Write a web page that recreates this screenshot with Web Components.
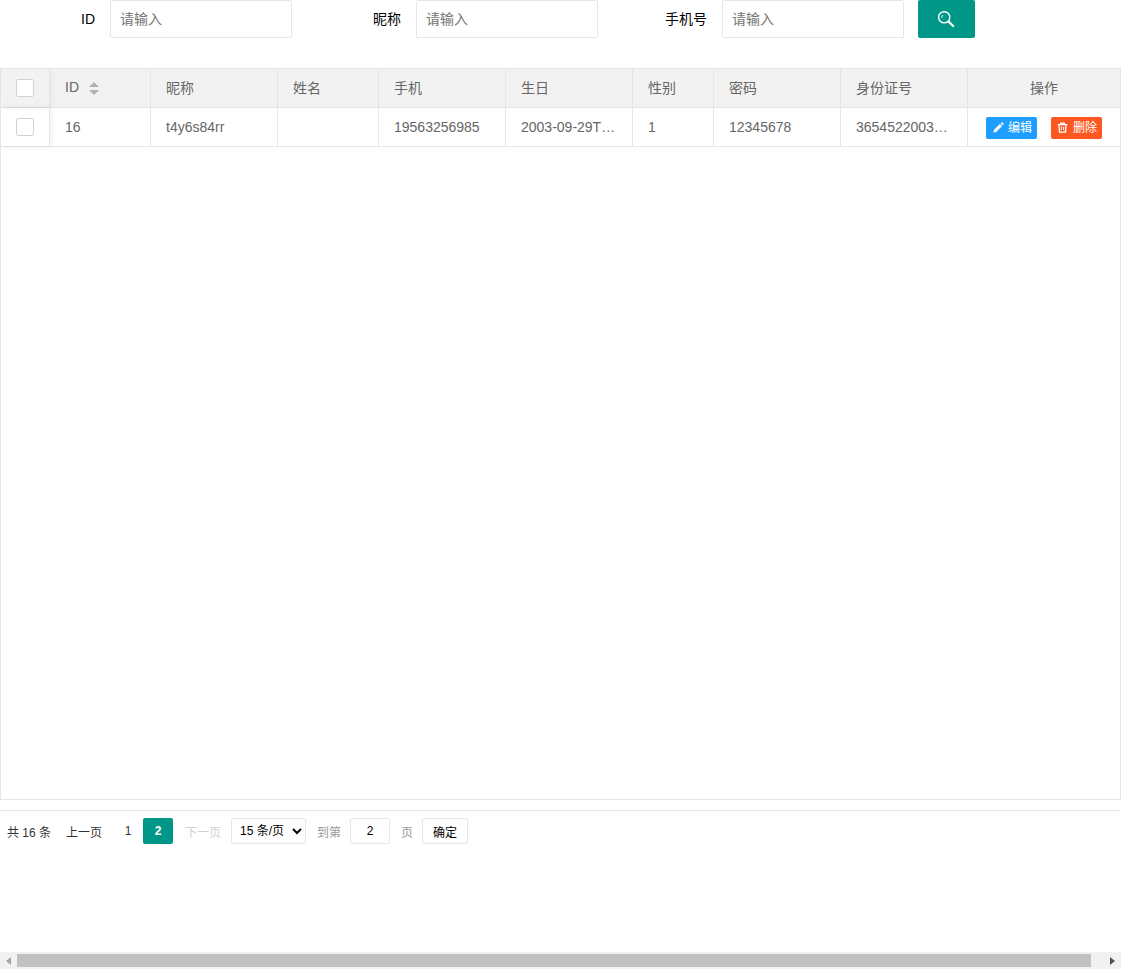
<!DOCTYPE html>
<html lang="zh">
<head>
<meta charset="utf-8">
<title>用户列表</title>
<style>
  html, body { margin: 0; padding: 0; background: #fff; overflow: hidden; }
  body { font: 14px "Liberation Sans", "Noto Sans CJK SC", sans-serif; color: #666; }
</style>
</head>
<body>
<user-page>
  <search-form></search-form>
  <data-table></data-table>
  <table-pager></table-pager>
</user-page>
<h-scrollbar></h-scrollbar>
<script>
"use strict";

const Columns = [
  { title: '', width: 49 },
  { title: 'ID', width: 101, sort: true },
  { title: '昵称', width: 127 },
  { title: '姓名', width: 101 },
  { title: '手机', width: 127 },
  { title: '生日', width: 127 },
  { title: '性别', width: 81 },
  { title: '密码', width: 127 },
  { title: '身份证号', width: 127 },
  { title: '操作', width: 152, center: true }
];
const Rows = [
  ['16', 't4y6s84rr', '', '19563256985', '2003-09-29T…', '1', '12345678', '3654522003…']
];

class UserPage extends HTMLElement {
  constructor() {
    super();
    this.attachShadow({ mode: 'open' }).innerHTML = `
    <style>
      :host { display: flex; flex-direction: column; height: 952px; }
    </style>
    <slot></slot>`;
  }
}

class SearchForm extends HTMLElement {
  constructor() {
    super();
    const fields = ['ID', '昵称', '手机号'].map((name) => `
      <label>${name}</label>
      <input type="text" placeholder="请输入">`).join('');
    this.attachShadow({ mode: 'open' }).innerHTML = `
    <style>
      :host { display: block; margin-bottom: 30px; }
      .row { display: flex; align-items: stretch; height: 38px; }
      label {
        width: 80px; padding: 0 15px; line-height: 38px; text-align: right;
        color: #000; font-size: 14px;
      }
      input {
        box-sizing: border-box; width: 182px; height: 38px; margin: 0 14px 0 0; padding: 0 0 0 9px;
        border: 1px solid #e6e6e6; border-radius: 2px; outline: none; background: #fff;
        font: inherit; color: #666;
      }
      input::placeholder { color: #757575; opacity: 1; }
      button {
        display: flex; align-items: center; justify-content: center;
        width: 57px; height: 38px; padding: 0; border: 0; border-radius: 2px; background: #009688;
      }
    </style>
    <div class="row">
      ${fields}
      <button type="button" aria-label="搜索">
        <svg width="18" height="18" viewBox="0 0 18 18" fill="none" stroke="#fff">
          <circle cx="6.2" cy="7.3" r="5.6" stroke-width="1.4"/>
          <path d="M3.8 7.800c0-1.200.4-2.200 1.200-2.800" stroke-width="1"/>
          <path d="M10.600 11.600l4.600 4.400" stroke-width="2.200" stroke-linecap="round"/>
        </svg>
      </button>
    </div>`;
  }
}

class CheckBox extends HTMLElement {
  constructor() {
    super();
    this.attachShadow({ mode: 'open' }).innerHTML = `
    <style>
      :host {
        display: block; box-sizing: border-box; width: 18px; height: 18px;
        border: 1px solid #d2d2d2; border-radius: 2px; background: #fff;
      }
    </style>`;
  }
}

class SmallButton extends HTMLElement {
  constructor() {
    super();
    const kind = this.getAttribute('kind');
    const edit = kind === 'edit';
    const icon = edit
      ? '<path d="M1.500 12.500l.7-3 6.300-6.300 2.300 2.300-6.300 6.300zM9.300 2.400l.8-.8c.3-.3.7-.3 1 0l1.300 1.300c.3.3.3.7 0 1l-.8.8z" fill="#fff"/>'
      : '<path d="M1.800 3.800h10.400M5 3.600V2.200h4v1.400M3.200 4l.6 8h6.400l.6-8" fill="none" stroke="#fff" stroke-width="1.400"/><path d="M5.800 6.200v3.600M8.200 6.200v3.600" stroke="#fff" stroke-width="1.100"/>';
    this.attachShadow({ mode: 'open' }).innerHTML = `
    <style>
      :host {
        display: inline-flex; align-items: center; gap: ${edit ? 3 : 4}px;
        box-sizing: border-box; width: 51px; height: 22px; margin-top: 1px;
        padding-left: ${edit ? 6 : 5}px; border-radius: 2px;
        color: #fff; font-size: 12px; line-height: 22px;
        background: ${edit ? '#1e9fff' : '#ff5722'};
      }
      svg { flex: none; }
    </style>
    <svg width="13" height="13" viewBox="0 0 14 14">${icon}</svg><slot></slot>`;
  }
}

class DataTable extends HTMLElement {
  constructor() {
    super();
    const track = Columns.map((c) => c.width + 'px').join(' ');
    const head = Columns.map((c, i) => {
      if (i === 0) {
        return '<div class="cell check"><check-box></check-box></div>';
      }
      const sort = c.sort ? `
        <svg class="sort" width="10" height="13" viewBox="0 0 10 13" fill="#b2b2b2"><path d="M5 0l5 5H0zM5 13L0 8h10z"/></svg>` : '';
      return `<div class="cell${c.center ? ' center' : ''}"><span class="text">${c.title}</span>${sort}</div>`;
    }).join('');
    const body = Rows.map((r) => `
      <div class="row">
        <div class="cell check"><check-box></check-box></div>
        ${r.map((v) => `<div class="cell"><span class="text">${v}</span></div>`).join('')}
        <div class="cell actions">
          <small-button kind="edit">编辑</small-button>
          <small-button kind="delete">删除</small-button>
        </div>
      </div>`).join('');
    this.attachShadow({ mode: 'open' }).innerHTML = `
    <style>
      :host {
        display: block; box-sizing: border-box; height: 732px;
        border: 1px solid #e6e6e6; background: #fff; overflow: hidden;
      }
      .row { display: grid; grid-template-columns: ${track}; height: 39px; box-sizing: border-box; border-bottom: 1px solid #e6e6e6; }
      .row.head { background: #f2f2f2; }
      .head .text { margin-bottom: 2px; }
      .cell {
        display: flex; align-items: center; box-sizing: border-box; min-width: 0;
        padding: 0 15px; border-right: 1px solid #e6e6e6; font-size: 14px; color: #666;
      }
      .cell:last-child { border-right: 0; }
      .text { white-space: nowrap; }
      .check {
        justify-content: center; padding: 0; position: relative; z-index: 1;
        background: inherit; box-shadow: 1px 0 6px rgba(0, 0, 0, .07);
      }
      .center { justify-content: center; }
      .sort { flex: none; margin-left: 10px; }
      .actions { justify-content: flex-start; gap: 14px; padding: 0 0 0 18px; }
    </style>
    <div class="row head">${head}</div>
    ${body}`;
  }
}

class TablePager extends HTMLElement {
  constructor() {
    super();
    this.attachShadow({ mode: 'open' }).innerHTML = `
    <style>
      :host {
        display: flex; align-items: center; box-sizing: border-box; height: 34px;
        margin-top: 10px; padding: 7px 0 0 7px; border-top: 1px solid #e6e6e6;
        font-size: 12px; color: #333;
      }
      .prev { margin-left: 15px; }
      .num { width: 30px; text-align: center; line-height: 26px; }
      .first { margin-left: 11px; }
      .current { height: 26px; border-radius: 2px; background: #009688; color: #fff; font-weight: bold; }
      .next { margin-left: 12px; color: #d2d2d2; }
      select {
        box-sizing: border-box; width: 75px; height: 26px; margin-left: 10px; padding: 0 0 0 4px;
        border: 1px solid #e6e6e6; border-radius: 2px; background: #fff; color: #000;
        font: inherit; outline: none;
      }
      .muted { color: #999; }
      .goto { margin-left: 11px; }
      input {
        box-sizing: border-box; width: 40px; height: 26px; margin-left: 9px; padding: 0;
        border: 1px solid #e6e6e6; border-radius: 2px; text-align: center;
        font: inherit; color: #000; outline: none;
      }
      .page { margin-left: 11px; }
      button {
        box-sizing: border-box; width: 46px; height: 26px; margin-left: 9px; padding: 0;
        border: 1px solid #e6e6e6; border-radius: 2px; background: #fff; color: #000; font: inherit;
      }
    </style>
    <span>共 16 条</span>
    <span class="prev">上一页</span>
    <span class="num first">1</span>
    <span class="num current">2</span>
    <span class="next">下一页</span>
    <select><option>15 条/页</option></select>
    <span class="muted goto">到第</span>
    <input type="text" value="2">
    <span class="muted page">页</span>
    <button type="button">确定</button>`;
  }
}

class HScrollbar extends HTMLElement {
  constructor() {
    super();
    this.attachShadow({ mode: 'open' }).innerHTML = `
    <style>
      :host { display: flex; align-items: center; height: 17px; background: #f1f1f1; }
      .end { display: flex; align-items: center; justify-content: center; flex: none; width: 17px; height: 17px; }
      .thumb { flex: none; width: 1074px; height: 13px; background: #c1c1c1; }
      .gap { flex: 1; }
    </style>
    <div class="end"><svg width="5" height="8" viewBox="0 0 5 8"><path d="M5 0v8L0 4z" fill="#a3a3a3"/></svg></div>
    <div class="thumb"></div>
    <div class="gap"></div>
    <div class="end"><svg width="5" height="8" viewBox="0 0 5 8"><path d="M0 0v8l5-4z" fill="#505050"/></svg></div>`;
  }
}

customElements.define('user-page', UserPage);
customElements.define('search-form', SearchForm);
customElements.define('check-box', CheckBox);
customElements.define('small-button', SmallButton);
customElements.define('data-table', DataTable);
customElements.define('table-pager', TablePager);
customElements.define('h-scrollbar', HScrollbar);
</script>
</body>
</html>
